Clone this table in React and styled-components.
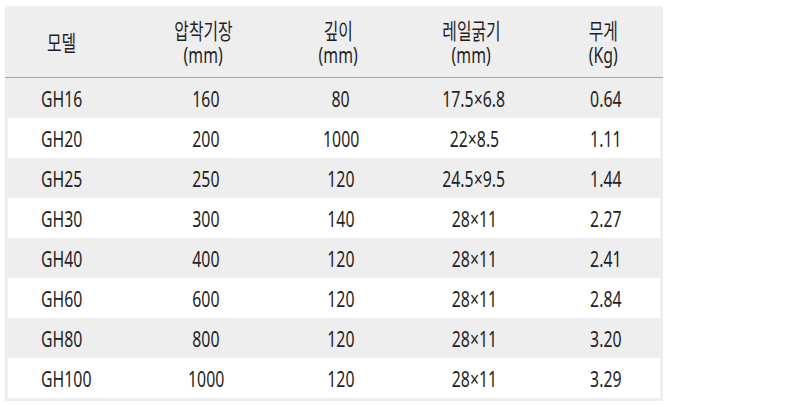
import styled, { createGlobalStyle } from "styled-components";

const GlobalStyle = createGlobalStyle`
  body {
    margin: 0;
    background: #ffffff;
    font-family: "Noto Sans", "Noto Sans CJK KR", sans-serif;
  }
`;

const Page = styled.div`
  padding: 6px 0 0 5px;
`;

const Table = styled.div`
  width: 658px;
  background: #eeeeef;
  padding: 0 0 3px;
  box-sizing: border-box;
`;

const COLS = "112px 172px 98px 168px 96px 12px";

const HeadRow = styled.div`
  display: grid;
  grid-template-columns: ${COLS};
  height: 71px;
  align-items: center;
  border-bottom: 1px solid #a7a7a7;
`;

const Row = styled.div`
  display: grid;
  grid-template-columns: ${COLS};
  height: 40px;
  align-items: center;
  margin: 0 3px;
  background: ${(p) => (p.$striped ? "transparent" : "#ffffff")};
`;

const Cell = styled.div`
  text-align: ${(p) => (p.$left ? "left" : "center")};
  padding-left: ${(p) => p.$pad || 0}px;
  color: #1f1f1f;
  font-size: 22px;
  line-height: 24px;
  white-space: nowrap;
`;

const Squeeze = styled.span`
  display: inline-block;
  transform: scaleX(0.72);
  transform-origin: ${(p) => (p.$left ? "left" : "center")} center;
`;

const headers = [
  ["모델"],
  ["압착기장", "(mm)"],
  ["깊이", "(mm)"],
  ["레일굵기", "(mm)"],
  ["무게", "(Kg)"]
];

const rows = [
  ["GH16", "160", "80", "17.5×6.8", "0.64"],
  ["GH20", "200", "1000", "22×8.5", "1.11"],
  ["GH25", "250", "120", "24.5×9.5", "1.44"],
  ["GH30", "300", "140", "28×11", "2.27"],
  ["GH40", "400", "120", "28×11", "2.41"],
  ["GH60", "600", "120", "28×11", "2.84"],
  ["GH80", "800", "120", "28×11", "3.20"],
  ["GH100", "1000", "120", "28×11", "3.29"]
];

const App = () => {
  return (
    <Page>
      <GlobalStyle />
      <Table>
        <HeadRow>
          {headers.map((lines, i) => (
            <Cell key={i} $left={i === 0} $pad={i === 0 ? 42 : 0}>
              {lines.map((line) => (
                <div key={line}>
                  <Squeeze $left={i === 0}>{line}</Squeeze>
                </div>
              ))}
            </Cell>
          ))}
        </HeadRow>
        {rows.map((row, r) => (
          <Row key={row[0]} $striped={r % 2 === 0}>
            {row.map((val, i) => (
              <Cell key={i} $left={i === 0} $pad={i === 0 ? 33 : 0}>
                <Squeeze $left={i === 0}>{val}</Squeeze>
              </Cell>
            ))}
          </Row>
        ))}
      </Table>
    </Page>
  );
};

export default App;
